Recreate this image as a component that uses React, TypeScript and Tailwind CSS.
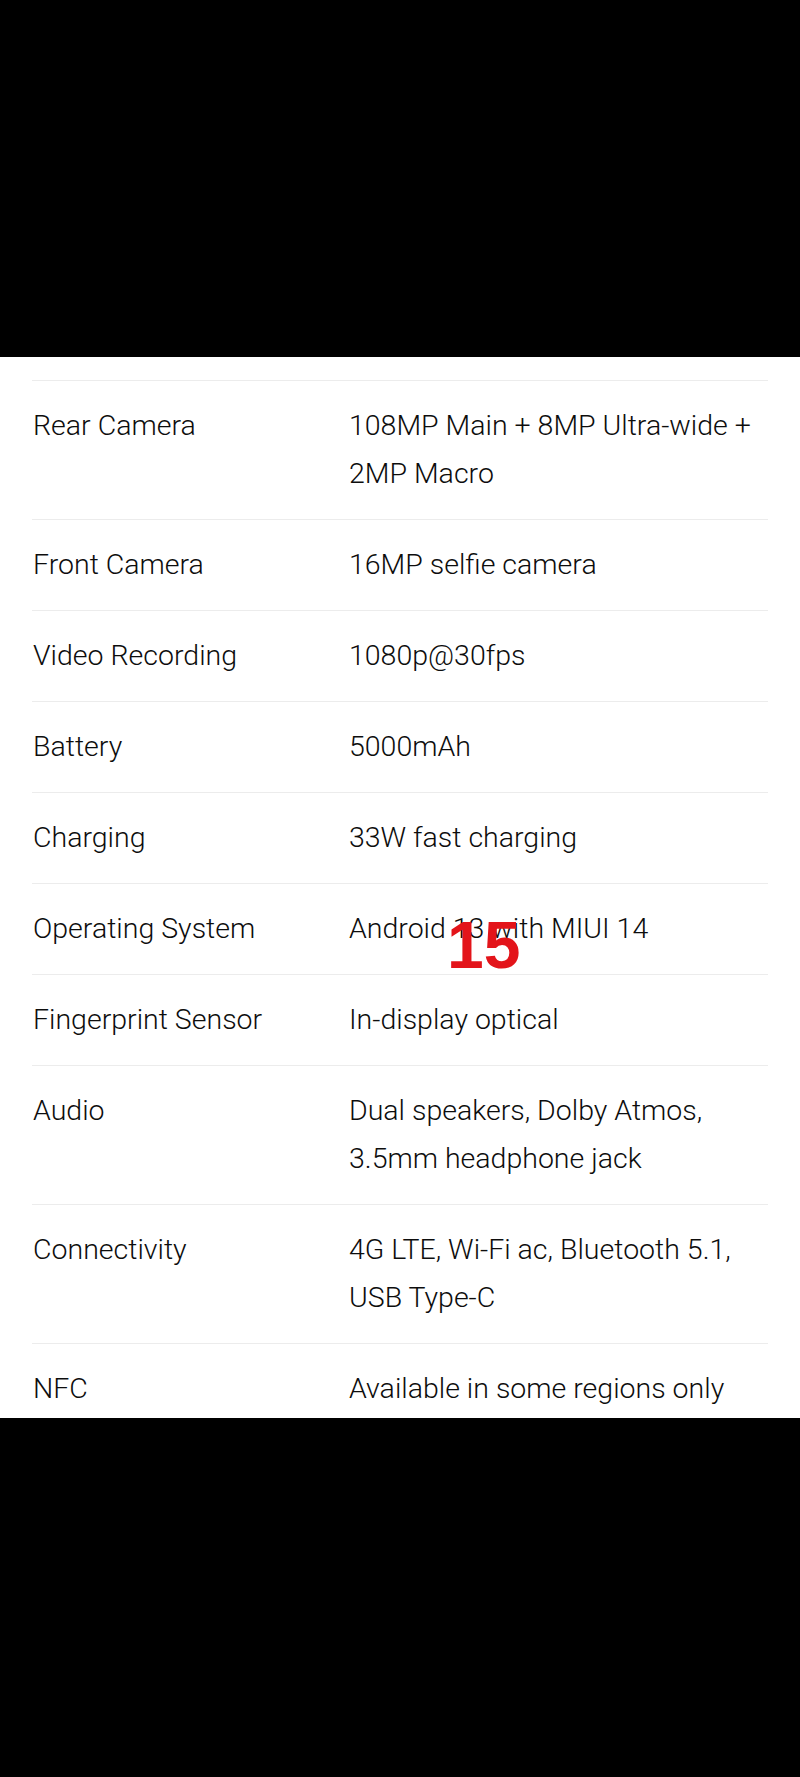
import React from 'react';

// --- Spec rows ---
const specs: { label: string; value: string[] }[] = [
  { label: 'Rear Camera', value: ['108MP Main + 8MP Ultra-wide +', '2MP Macro'] },
  { label: 'Front Camera', value: ['16MP selfie camera'] },
  { label: 'Video Recording', value: ['1080p@30fps'] },
  { label: 'Battery', value: ['5000mAh'] },
  { label: 'Charging', value: ['33W fast charging'] },
  { label: 'Operating System', value: ['Android 13 with MIUI 14'] },
  { label: 'Fingerprint Sensor', value: ['In-display optical'] },
  { label: 'Audio', value: ['Dual speakers, Dolby Atmos,', '3.5mm headphone jack'] },
  { label: 'Connectivity', value: ['4G LTE, Wi-Fi ac, Bluetooth 5.1,', 'USB Type-C'] },
  { label: 'NFC', value: ['Available in some regions only'] },
];

function App() {
  return (
    <div className="w-[800px] h-[1777px] bg-black flex flex-col overflow-hidden" style={{ fontFamily: 'Roboto, "Liberation Sans", sans-serif' }}>
      {/* top black band */}
      <div className="h-[357px] shrink-0" />

      {/* spec sheet */}
      <div className="relative h-[1061px] shrink-0 bg-white px-8 pt-[23px] overflow-hidden">
        <div className="border-t border-[#ececec]">
          {specs.map((s, i) => (
            <div
              key={s.label}
              className={`flex py-[21px] text-[28.5px] leading-[48px] font-light text-[#0d0d0d] ${i < specs.length - 1 ? 'border-b border-[#ececec]' : ''}`}
            >
              <div className="w-[317px] shrink-0 pl-px">{s.label}</div>
              <div className="flex-1">
                {s.value.map((line) => (
                  <div key={line} className="whitespace-nowrap">{line}</div>
                ))}
              </div>
            </div>
          ))}
        </div>

        {/* page number stamp */}
        <div className="absolute left-[447px] top-[555px] text-[66px] leading-none font-bold text-[#e3141a]" style={{ fontFamily: '"Liberation Sans", Arial, sans-serif' }}>
          15
        </div>
      </div>

      {/* bottom black band */}
      <div className="flex-1" />
    </div>
  );
}

export default App;
